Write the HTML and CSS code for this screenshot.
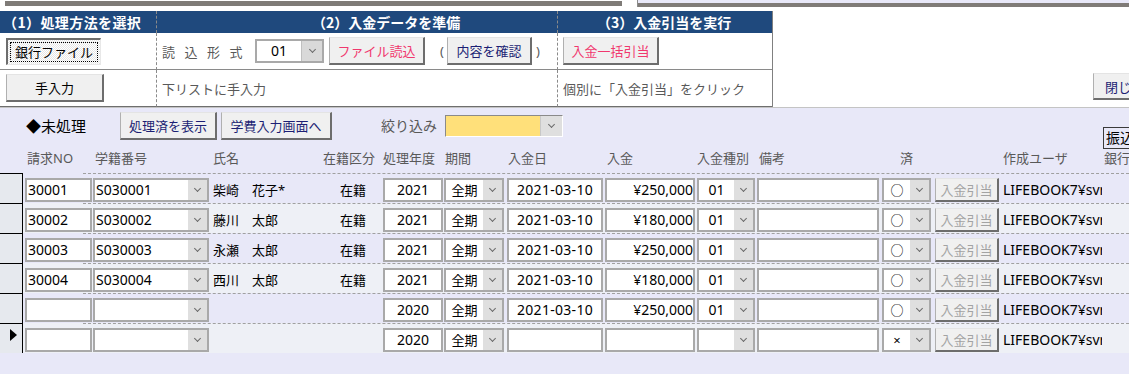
FILE: index.html
```html
<!DOCTYPE html>
<html lang="ja">
  <head>
    <meta charset="UTF-8" />
    <meta name="viewport" content="width=device-width, initial-scale=1.0" />
    <title>入金引当</title>
    <link rel="stylesheet" href="styles.css">
  </head>
  <body>
    <div class="topstrip">
      <div class="strip-a"></div>
      <div class="strip-b"></div>
    </div>

    <div class="head-area">
      <div class="steps">
        <div class="step-title t1">（1）処理方法を選択</div>
        <div class="step-title t2">（2）入金データを準備</div>
        <div class="step-title t3">（3）入金引当を実行</div>

        <div class="step-cell c1">
          <button class="btn btn-pressed"><span>銀行ファイル</span></button>
        </div>
        <div class="step-cell c2">
          <span class="label-fmt">読込形式</span>
          <div class="combo combo-fmt"><span class="val">01</span><span class="dd"></span></div>
          <button class="btn btn-pink btn-load">ファイル読込</button>
          <span class="paren first">(</span>
          <button class="btn btn-navy btn-check">内容を確認</button>
          <span class="paren">)</span>
        </div>
        <div class="step-cell c3">
          <button class="btn btn-pink btn-bulk">入金一括引当</button>
        </div>

        <div class="step-cell c1 last">
          <button class="btn btn-manual">手入力</button>
        </div>
        <div class="step-cell c2 last note">下リストに手入力</div>
        <div class="step-cell c3 last note">個別に「入金引当」をクリック</div>
      </div>
      <button class="btn btn-navy btn-close">閉じる</button>
    </div>

    <div class="main">
      <div class="filter-bar">
        <span class="mark">◆未処理</span>
        <button class="btn btn-navy btn-done">処理済を表示</button>
        <button class="btn btn-navy btn-fee">学費入力画面へ</button>
        <span class="filter-label">絞り込み</span>
        <div class="combo combo-filter"><span class="val"></span><span class="dd"></span></div>
        <div class="transfer">振込</div>
      </div>

      <div class="col-labels">
        <span>請求NO</span>
        <span>学籍番号</span>
        <span>氏名</span>
        <span class="l0">在籍区分</span>
        <span class="l0">処理年度</span>
        <span class="l1">期間</span>
        <span class="l1">入金日</span>
        <span>入金</span>
        <span class="l0">入金種別</span>
        <span>備考</span>
        <span class="l18">済</span>
        <span></span>
        <span class="l0">作成ユーザ</span>
        <span class="l0">銀行</span>
      </div>

      <div class="records">
        <div class="rec">
          <div class="sel"></div>
          <div class="rec-body">
            <div class="dash"></div>
            <div class="cells">
              <div class="fld f-no">30001</div>
              <div class="combo f-stu"><span class="val">S030001</span><span class="dd"></span></div>
              <div class="name">柴崎　花子*</div>
              <div class="status">在籍</div>
              <div class="fld f-year">2021</div>
              <div class="combo f-term"><span class="val">全期</span><span class="dd"></span></div>
              <div class="fld f-date">2021-03-10</div>
              <div class="fld f-amt">¥250,000</div>
              <div class="combo f-kind"><span class="val">01</span><span class="dd"></span></div>
              <div class="fld f-memo"></div>
              <div class="combo f-done"><span class="val">○</span><span class="dd"></span></div>
              <button class="btn btn-assign">入金引当</button>
              <div class="user">LIFEBOOK7¥svr</div>
            </div>
          </div>
        </div>

        <div class="rec">
          <div class="sel"></div>
          <div class="rec-body">
            <div class="dash"></div>
            <div class="cells">
              <div class="fld f-no">30002</div>
              <div class="combo f-stu"><span class="val">S030002</span><span class="dd"></span></div>
              <div class="name">藤川　太郎</div>
              <div class="status">在籍</div>
              <div class="fld f-year">2021</div>
              <div class="combo f-term"><span class="val">全期</span><span class="dd"></span></div>
              <div class="fld f-date">2021-03-10</div>
              <div class="fld f-amt">¥180,000</div>
              <div class="combo f-kind"><span class="val">01</span><span class="dd"></span></div>
              <div class="fld f-memo"></div>
              <div class="combo f-done"><span class="val">○</span><span class="dd"></span></div>
              <button class="btn btn-assign">入金引当</button>
              <div class="user">LIFEBOOK7¥svr</div>
            </div>
          </div>
        </div>

        <div class="rec">
          <div class="sel"></div>
          <div class="rec-body">
            <div class="dash"></div>
            <div class="cells">
              <div class="fld f-no">30003</div>
              <div class="combo f-stu"><span class="val">S030003</span><span class="dd"></span></div>
              <div class="name">永瀬　太郎</div>
              <div class="status">在籍</div>
              <div class="fld f-year">2021</div>
              <div class="combo f-term"><span class="val">全期</span><span class="dd"></span></div>
              <div class="fld f-date">2021-03-10</div>
              <div class="fld f-amt">¥250,000</div>
              <div class="combo f-kind"><span class="val">01</span><span class="dd"></span></div>
              <div class="fld f-memo"></div>
              <div class="combo f-done"><span class="val">○</span><span class="dd"></span></div>
              <button class="btn btn-assign">入金引当</button>
              <div class="user">LIFEBOOK7¥svr</div>
            </div>
          </div>
        </div>

        <div class="rec">
          <div class="sel"></div>
          <div class="rec-body">
            <div class="dash"></div>
            <div class="cells">
              <div class="fld f-no">30004</div>
              <div class="combo f-stu"><span class="val">S030004</span><span class="dd"></span></div>
              <div class="name">西川　太郎</div>
              <div class="status">在籍</div>
              <div class="fld f-year">2021</div>
              <div class="combo f-term"><span class="val">全期</span><span class="dd"></span></div>
              <div class="fld f-date">2021-03-10</div>
              <div class="fld f-amt">¥180,000</div>
              <div class="combo f-kind"><span class="val">01</span><span class="dd"></span></div>
              <div class="fld f-memo"></div>
              <div class="combo f-done"><span class="val">○</span><span class="dd"></span></div>
              <button class="btn btn-assign">入金引当</button>
              <div class="user">LIFEBOOK7¥svr</div>
            </div>
          </div>
        </div>

        <div class="rec">
          <div class="sel"></div>
          <div class="rec-body">
            <div class="dash"></div>
            <div class="cells">
              <div class="fld f-no"></div>
              <div class="combo f-stu"><span class="val"></span><span class="dd"></span></div>
              <div class="name"></div>
              <div class="status"></div>
              <div class="fld f-year">2020</div>
              <div class="combo f-term"><span class="val">全期</span><span class="dd"></span></div>
              <div class="fld f-date">2021-03-10</div>
              <div class="fld f-amt">¥250,000</div>
              <div class="combo f-kind"><span class="val">01</span><span class="dd"></span></div>
              <div class="fld f-memo"></div>
              <div class="combo f-done"><span class="val">○</span><span class="dd"></span></div>
              <button class="btn btn-assign">入金引当</button>
              <div class="user">LIFEBOOK7¥svr</div>
            </div>
          </div>
        </div>

        <div class="rec">
          <div class="sel"><span class="arrow"></span></div>
          <div class="rec-body">
            <div class="dash"></div>
            <div class="cells">
              <div class="fld f-no"></div>
              <div class="combo f-stu"><span class="val"></span><span class="dd"></span></div>
              <div class="name"></div>
              <div class="status"></div>
              <div class="fld f-year">2020</div>
              <div class="combo f-term"><span class="val">全期</span><span class="dd"></span></div>
              <div class="fld f-date"></div>
              <div class="fld f-amt"></div>
              <div class="combo f-kind"><span class="val"></span><span class="dd"></span></div>
              <div class="fld f-memo"></div>
              <div class="combo f-done"><span class="val">×</span><span class="dd"></span></div>
              <button class="btn btn-assign">入金引当</button>
              <div class="user">LIFEBOOK7¥svr</div>
            </div>
          </div>
        </div>
      </div>
    </div>
  </body>
</html>
```

FILE: styles.css
```css
body {
  margin: 0;
  width: 1129px;
  height: 374px;
  overflow: hidden;
  font-family: "Noto Sans", "Noto Sans CJK JP", sans-serif;
  font-size: 13px;
  color: #000;
  background-color: #e8e8f8;
}

/* strip above the form header */
.topstrip {
  display: flex;
  height: 7px;
  background-color: #fff;
}

.strip-a {
  width: 617px;
  margin: 1px 0 1px 5px;
  background-color: #7f7b77;
}

.strip-b {
  flex: 1;
  margin-left: 15px;
  border-left: 1px solid #8c8c8c;
  background: linear-gradient(#e8e8f8 0 3px, #7f7b77 3px 7px);
}

/* step panel */
.head-area {
  display: flex;
  height: 100px;
  background-color: #fff;
  border-bottom: 1px solid #c4c4c4;
}

.steps {
  display: grid;
  grid-template-columns: 156px 401px 215px;
  grid-template-rows: 22px 37px 37px;
  margin-top: 4px;
  border-right: 1px solid #808080;
  flex-shrink: 0;
  align-self: flex-start;
}

.step-title {
  background-color: #1f497d;
  color: #fff;
  font-weight: bold;
  font-size: 14px;
  line-height: 22px;
  white-space: nowrap;
  font-family: "Noto Sans CJK JP", sans-serif;
}

.t1 {
  padding-left: 3px;
  letter-spacing: 0.4px;
}

.t2 {
  padding-left: 155px;
  border-left: 1px dashed #8a8a8a;
}

.t3 {
  padding-left: 39px;
  border-left: 1px dashed #8a8a8a;
}

.step-cell {
  display: flex;
  align-items: center;
  box-sizing: border-box;
  border-bottom: 1px solid #8a8a8a;
  white-space: nowrap;
}

.step-cell.last {
  border-bottom-color: #6e6e6e;
}

.step-cell.c1 {
  padding-left: 6px;
}

.step-cell.c2,
.step-cell.c3 {
  padding-left: 5px;
  border-left: 1px dashed #8a8a8a;
}

.note {
  color: #595959;
}

.label-fmt {
  width: 93px;
  letter-spacing: 9.5px;
  color: #595959;
  flex-shrink: 0;
}

/* buttons */
.btn {
  font-family: inherit;
  font-size: 13px;
  height: 28px;
  padding: 0;
  box-sizing: border-box;
  background-color: #f0f0f0;
  border-style: solid;
  border-width: 1px 2px 2px 1px;
  border-color: #e4e4e4 #6d6d6d #6d6d6d #b0b0b0;
  color: #000;
  flex-shrink: 0;
  white-space: nowrap;
  cursor: pointer;
}

.btn-pressed {
  width: 95px;
  height: 27px;
  padding: 2px;
  border-width: 2px 1px 1px 2px;
  border-color: #6d6d6d #e8e8e8 #e8e8e8 #6d6d6d;
  background: repeating-conic-gradient(#fff 0 25%, #e6e6e6 0 50%) 0 0 / 2px 2px;
}

.btn-pressed span {
  display: flex;
  align-items: center;
  justify-content: center;
  height: 100%;
  box-sizing: border-box;
  border: 1px dotted #000;
}

.btn-manual {
  width: 98px;
}

.btn-pink {
  color: #f0386e;
  width: 96px;
}

.btn-navy {
  color: #1c1f74;
}

.btn-load {
  margin-left: 5px;
}

.btn-check {
  width: 85px;
}

.paren {
  width: 10px;
  text-align: center;
  color: #595959;
  flex-shrink: 0;
}

.paren.first {
  margin-left: 12px;
}

.paren:not(.first) {
  margin-left: 1px;
}

.btn-close {
  width: 64px;
  height: 27px;
  margin: 66px 0 0 320px;
}

/* combo boxes */
.combo {
  display: flex;
  box-sizing: border-box;
  border: 2px solid #a9a9a9;
  background-color: #fff;
}

.combo .val {
  flex: 1;
  font-size: 14px;
  line-height: 20px;
  text-align: center;
  white-space: nowrap;
  overflow: hidden;
}

.combo .dd {
  width: 19px;
  display: flex;
  align-items: center;
  justify-content: center;
  background-color: #dfdfdf;
}

.combo .dd::after {
  content: "";
  width: 4px;
  height: 4px;
  margin-top: -3px;
  border-right: 1px solid #6a6a6a;
  border-bottom: 1px solid #6a6a6a;
  transform: rotate(45deg);
}

.combo-fmt {
  width: 69px;
  height: 24px;
}

.combo-fmt .dd {
  width: 20px;
  background-color: #d9d9d9;
  border-left: 1px solid #c0c0c0;
}

/* filter bar */
.filter-bar {
  display: flex;
  align-items: flex-start;
  height: 42px;
  padding-top: 4px;
  box-sizing: border-box;
}

.filter-bar > * {
  flex-shrink: 0;
}

.mark {
  width: 94px;
  margin-left: 26px;
  font-size: 15px;
  line-height: 28px;
}

.btn-done {
  width: 97px;
}

.btn-fee {
  width: 111px;
  margin-left: 4px;
}

.filter-label {
  width: 56px;
  margin-left: 49px;
  font-size: 14px;
  line-height: 28px;
  color: #595959;
}

.combo-filter {
  width: 118px;
  height: 22px;
  margin: 3px 0 0 8px;
  border-width: 1px;
  border-color: #8a8a8a #fff #fff #8a8a8a;
  background-color: #ffe07a;
}

.combo-filter .dd {
  width: 21px;
  border-left: 1px solid #c8c8c8;
}

.transfer {
  align-self: flex-end;
  height: 22px;
  margin: 0 0 1px 540px;
  padding: 0 4px 0 2px;
  box-sizing: border-box;
  border: 1px solid #3a3a3a;
  font-size: 14px;
  line-height: 20px;
}

/* list */
.col-labels,
.cells {
  display: grid;
  grid-template-columns: 68px 118px 112px 60px 61px 63px 98px 92px 60px 125px 53px 68px 101px 100px;
}

.col-labels {
  height: 23px;
  padding-left: 25px;
  line-height: 17px;
  color: #595959;
  white-space: nowrap;
}

.col-labels span {
  padding-left: 2px;
}

.col-labels .l0 {
  padding-left: 0;
}

.col-labels .l1 {
  padding-left: 1px;
}

.col-labels .l18 {
  padding-left: 18px;
}

.rec {
  display: flex;
  height: 30px;
}

.sel {
  width: 22px;
  flex-shrink: 0;
  border-top: 1px solid #000;
  border-right: 1px solid #000;
  background-color: #e6e9ee;
}

.sel .arrow {
  display: block;
  width: 0;
  height: 0;
  margin: 5px 0 0 10px;
  border-left: 7px solid #000;
  border-top: 6px solid transparent;
  border-bottom: 6px solid transparent;
}

.rec-body {
  flex: 1;
  min-width: 0;
  background-color: #e8e8f8;
}

.rec:nth-child(even) .rec-body {
  background-color: #eef0f6;
}

.dash {
  margin-left: 60px;
  border-top: 1px dashed #a0a0a0;
}

.cells {
  height: 24px;
  margin: 4px 0 0 2px;
}

.fld {
  box-sizing: border-box;
  border: 2px solid #a9a9a9;
  background-color: #fff;
  font-size: 14px;
  line-height: 20px;
  white-space: nowrap;
  overflow: hidden;
}

.f-no {
  width: 67px;
  padding-left: 1px;
}

.f-stu {
  width: 116px;
}

.f-stu .val {
  text-align: left;
  padding-left: 1px;
}

.f-year {
  width: 60px;
  text-align: center;
}

.f-term {
  width: 60px;
}

.f-term .val {
  font-size: 13px;
}

.f-date {
  width: 96px;
  text-align: center;
  letter-spacing: 0.3px;
}

.f-amt {
  width: 90px;
  text-align: right;
}

.f-kind {
  width: 58px;
}

.f-memo {
  width: 122px;
}

.f-done {
  width: 49px;
}

.f-done .val {
  font-size: 13px;
}

.name {
  padding-left: 2px;
  line-height: 24px;
  white-space: nowrap;
}

.status {
  text-align: center;
  line-height: 24px;
}

.btn-assign {
  width: 64px;
  height: 24px;
  color: #a3a3a3;
}

.user {
  width: 99px;
  font-size: 14px;
  line-height: 24px;
  white-space: nowrap;
  overflow: hidden;
}
```
